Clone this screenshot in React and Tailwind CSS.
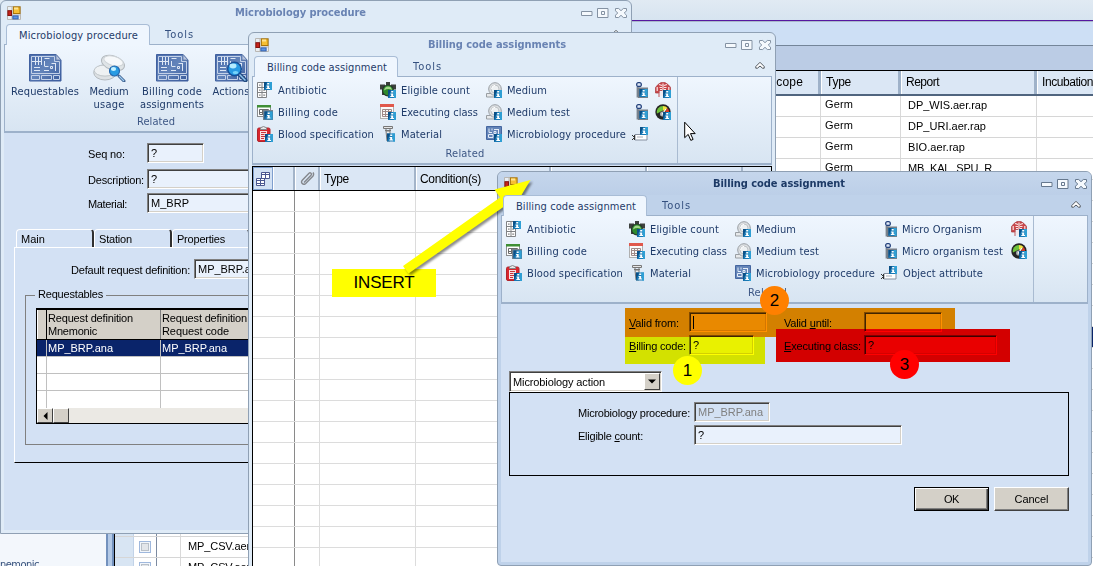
import { useLayoutEffect, useRef, useState } from "react";

const TAHOMA = "font-['DejaVu_Sans_Condensed','DejaVu_Sans',sans-serif] font-stretch-condensed";
const ARIAL = "font-['Liberation_Sans',Arial,sans-serif]";

/* Text that spreads or tightens its letters to take a given width. */
function Fit({ w, children, className = "" }) {
  const ref = useRef(null);
  const [spacing, setSpacing] = useState(0);
  useLayoutEffect(() => {
    const el = ref.current;
    const count = el.textContent.length;
    const natural = el.getBoundingClientRect().width - spacing * count;
    setSpacing((w - natural) / count);
  }, [w]);
  return (
    <span ref={ref} style={{ letterSpacing: spacing }} className={"inline-block shrink-0 whitespace-nowrap " + className}>
      {children}
    </span>
  );
}

/* ---------- small icons ---------- */

function Info({ x = 8, y = 8 }) {
  return (
    <g transform={`translate(${x} ${y})`}>
      <rect width="8" height="8" fill="#1878b4" />
      <path d="M0 8V0h3z" fill="#0b4f86" />
      <path d="M5 0h3v8H6z" fill="#2f9fd4" />
      <path d="M3.200 1h2v1.600h-2zM2.600 3.500h2.600v2.600h.8v1H2.300v-1h.9V4.400h-.6z" fill="#fff" />
    </g>
  );
}

function Svg({ children, size = 16 }) {
  return (
    <svg width={size} height={size} viewBox="0 0 16 16" className="shrink-0">
      {children}
    </svg>
  );
}

function Antibiotic() {
  return (
    <Svg>
      <path d="M.5.5h9v15h-9zM5 .5v15M.5 5.500h9M.5 10.500h9" fill="#fff" stroke="#808285" />
      <path d="M2 2.500h1.600v1.200H2zM6.200 7.500h2v1.200h-2zM2 7.500h1.600v1.200H2zM2 12.500h1.600v1.200H2zM6.200 12.500h2v1.200h-2z" fill="#888" />
      <Info x={7} y={0} />
    </Svg>
  );
}

function BillingCode() {
  return (
    <Svg>
      <rect x=".5" y="1.500" width="13" height="11" fill="#fff" stroke="#8a8d90" />
      <rect y="1" width="14" height="2.500" fill="#3f8f35" />
      <path d="M2.500 5.500h9v5h-9zM5.500 5.500v5M8.500 5.500v5M2.500 8.500h9" fill="none" stroke="#6c6c6c" />
      <rect x="6" y="6" width="10" height="10" fill="#77838f" />
      <Info x={7.5} y={7.5} />
    </Svg>
  );
}

function Blood() {
  return (
    <Svg>
      <rect x=".5" y="2" width="12.500" height="13.500" rx="1.500" fill="#d9262e" stroke="#b0242b" />
      <path d="M3.500 3.500V1.800Q6.500-.8 9.500 1.800v1.700z" fill="#e8e8e8" stroke="#85888b" />
      <path d="M3 5h7v9H3z" fill="#f8e2e2" />
      <path d="M4 6.500h5M4 8.500h3.500M4 10.500h4M4 12.500h3" stroke="#c9333a" />
      <Info />
    </Svg>
  );
}

function Eligible() {
  return (
    <Svg>
      <path d="M6 0h4v3H6zM0 2.500h5v5H0zM11 2.500h5v5h-5zM2 7h3v6H2z" fill="#3c403d" />
      <circle cx="8" cy="8.500" r="6" fill="#26332a" />
      <circle cx="8" cy="8.500" r="4.900" fill="#2f8a2d" />
      <path d="M4 8.500Q4.800 4.600 8 4.600T12 8Q8 6 4 8.500z" fill="#a2d889" />
      <Info />
    </Svg>
  );
}

function Executing() {
  return (
    <Svg>
      <rect x=".5" y=".5" width="13" height="14" fill="#fafafa" stroke="#b0b0b0" />
      <rect width="14" height="3" fill="#e0584c" />
      <path d="M2.500 5.500h9v7h-9zM5.500 5v8M8.500 5v8M2 7.500h10M2 10.500h10" fill="none" stroke="#a08a88" />
      <Info />
    </Svg>
  );
}

function Material() {
  return (
    <Svg>
      <path d="M3.500.5h9v2h-9zM5 4.500h6M6 2.500v2M10 2.500v2" fill="#e6e6e6" stroke="#777" />
      <path d="M6 5h4v10H7z" fill="#eee" stroke="#777" />
      <Info x={7} y={7.5} />
    </Svg>
  );
}

function Medium() {
  return (
    <Svg>
      <path d="M.5 11.500h11v3.500H.5z" fill="#e7e9eb" stroke="#999ea3" />
      <circle cx="9" cy="7" r="6.300" fill="#dde0e3" stroke="#999ea3" />
      <circle cx="9" cy="7" r="4" fill="#edf0f2" stroke="#bfc3c6" />
      <path d="M5.500 7Q6 3.500 9 3.300" fill="none" stroke="#fff" />
      <Info />
    </Svg>
  );
}

function Procedure() {
  return (
    <Svg>
      <path d="M.5.500h15v13H.5z" fill="#6384b8" stroke="#4466a0" />
      <path d="M3 2.500v4h3M6 2.500v2M8 3.500h4M8 5.500v2h2v-2zM12.500 3v5M2.500 8.500v3H7v-3zM8.500 10h5" fill="none" stroke="#e4edf8" />
      <Info />
    </Svg>
  );
}

function Organism() {
  return (
    <Svg>
      <rect x="2.700" y=".7" width="4.600" height="3.800" rx="1.500" fill="#dce6f6" stroke="#24427c" strokeWidth="1.300" />
      <path d="M3.500 5v10.500" stroke="#7a838e" strokeWidth="1.800" />
      <path d="M4 5.500h10V16H4z" fill="#767e88" />
      <Info x={5.500} y={7} />
    </Svg>
  );
}

function Attribute() {
  return (
    <Svg>
      <path d="M3 8.500h12v5.500H3z" fill="#fff" stroke="#8590a0" />
      <path d="M0 9l2.500 2.500M2.500 9v5M0 14l2-2" stroke="#333" fill="none" />
      <path d="M5 11h6" stroke="#a8aeb8" />
      <Info x={8} y={1} />
    </Svg>
  );
}

function Body() {
  return (
    <Svg>
      <path d="M3 2.500L6 .6h4L13 2.500l2.500 2.800V11H12V8.500H4V11H.5V5.500z" fill="#c9474b" stroke="#a8373b" strokeWidth=".7" />
      <path d="M4 2.500l3 1M12 2.500l-3 1M4.500 5.500H7M9 5.500h2.500M5 7.500h2M9 7.500h2M2.200 5v4M13.800 5v4M8 1.500V14M6 10v4" stroke="#f9e4e4" strokeWidth="1.200" />
      <path d="M4 9v6M10 9v4" stroke="#c2565a" />
      <Info />
    </Svg>
  );
}

function Gauge() {
  return (
    <Svg>
      <circle cx="8" cy="8" r="7.700" fill="#252525" />
      <path d="M2 9.500A6 6 0 0 1 8 2v4.500z" fill="#6fc33b" />
      <path d="M8 2q3 0 4.500 2L9.500 7 8 6.500z" fill="#f1e441" />
      <path d="M12.500 4q1.700 2 1.500 4L10 8z" fill="#da3a28" />
      <circle cx="7.500" cy="10" r="2.500" fill="#aab0b1" />
      <path d="M7 10.500L11 5" stroke="#fff" strokeWidth="1.200" />
      <Info />
    </Svg>
  );
}

function AppIcon() {
  return (
    <svg width="14" height="14" viewBox="0 0 14 14" className="shrink-0">
      <path d="M.5.5h13v13H.5zM5 1v12M1 9h12" fill="#e9edf1" stroke="#b9b7b3" />
      <rect x=".9" y="4.700" width="3.600" height="4.800" fill="#c72218" stroke="#82130f" />
      <rect x="6.400" y=".9" width="6.600" height="6.600" fill="#f6bf32" stroke="#a97408" />
      <path d="M7 1.500h4v2H7z" fill="#fee391" />
      <rect x="5.900" y="9.900" width="5.200" height="3" fill="#5d94e4" stroke="#2f60b2" />
    </svg>
  );
}

/* ---------- large icons ---------- */

function Blueprint({ children }) {
  return (
    <svg width="33" height="28" viewBox="0 0 33 28" className="shrink-0">
      <defs>
        <linearGradient id="bp" x1="0" y1="0" x2="1" y2="1">
          <stop offset="0" stopColor="#4a6cab" />
          <stop offset=".5" stopColor="#6384ba" />
          <stop offset="1" stopColor="#38599a" />
        </linearGradient>
      </defs>
      <path d="M.5.5H27l5 5.500v21H.5z" fill="url(#bp)" stroke="#4161a0" />
      <path d="M27 .5V6h5z" fill="#b6c4de" stroke="#5a74a5" strokeWidth=".7" />
      <path d="M2.500 19.500v-17h23V7.500h5v12zM2.500 21.500h8v4h-8zM12.500 21.500h10v4h-10zM24.500 21.500h6v4h-6z" fill="none" stroke="#c3d1e8" />
      <path d="M6.500 3v8M9.500 3v8M12.500 3v8M3 7.500h10M15.500 4.500h5M5 13.500h6M5 16.500h6M15.500 7v5M15.500 12.500h4M26.500 9v8M15 16.500h5M22.500 9.500h4M21.500 12.500h2v2h-2z" fill="none" stroke="#dfe8f5" />
      {children}
    </svg>
  );
}

function Lens() {
  return (
    <g>
      <path d="M24 20l6.500 6.500" stroke="#244c80" strokeWidth="4" strokeLinecap="round" />
      <path d="M24 20l6.500 6.500" stroke="#8fc4ee" strokeWidth="1.500" />
      <circle cx="19.500" cy="15" r="6.800" fill="#289be3" stroke="#164f98" strokeWidth="1.500" />
      <ellipse cx="18" cy="12" rx="3.500" ry="2.400" fill="#b4ecff" />
      <ellipse cx="20.500" cy="18.500" rx="2.800" ry="1.600" fill="#77d5fb" />
    </g>
  );
}

function Petri() {
  return (
    <svg width="33" height="28" viewBox="0 0 33 28" className="shrink-0">
      <ellipse cx="12" cy="18.500" rx="11.300" ry="7.500" fill="#dde1e4" stroke="#b3b9be" />
      <ellipse cx="12" cy="16.500" rx="10.800" ry="5.600" fill="#eef1f3" stroke="#bfc5c9" />
      <ellipse cx="20" cy="9" rx="12" ry="7" transform="rotate(20 20 9)" fill="#dfe4e7" stroke="#b3b9be" />
      <ellipse cx="20.500" cy="7" rx="10" ry="4.600" transform="rotate(16 20.500 7)" fill="#f6f8fa" stroke="#cfd4d8" />
      <path d="M26 22l5 5" stroke="#3c5f8e" strokeWidth="3" strokeLinecap="round" />
      <path d="M26 22l5 5" stroke="#9ccbf0" strokeWidth="1.200" />
      <circle cx="21.500" cy="17" r="5" fill="#289be3" stroke="#2569b0" strokeWidth="1.200" />
      <ellipse cx="20.500" cy="15" rx="2.600" ry="2" fill="#c4f1ff" />
    </svg>
  );
}

/* ---------- windows ---------- */

function WindowButtons({ stroke }) {
  return (
    <svg width="47" height="12" viewBox="0 0 47 12" className={"shrink-0 " + stroke} fill="#f5f9fd">
      <path d="M.5 4.500h10.500v4H.5zM16.500 1.500H27v9H16.500zM20.500 4.500h3v3h-3z" />
      <path d="M34.500 1.500h3.200l2.300 2.200 2.300-2.200h3.200v2.300L43.300 6l2.200 2.200v2.300h-3.200L40 8.300l-2.300 2.200h-3.200V8.200L36.700 6l-2.200-2.200z" />
    </svg>
  );
}

function Window({ place, active, title, titleX, titleW, tab, tabTextW, ribbon, children }) {
  return (
    <section
      className={
        "absolute flex flex-col overflow-hidden rounded-t-[6px] border border-[#8fa0b4] " +
        place +
        (active ? " rounded-b-[4px] bg-[#bfd2ea]" : " bg-[#dfebf7]")
      }
    >
      <header className={"flex h-[23px] shrink-0 items-center pr-[3px] pl-[6px] " + (active ? "bg-linear-to-b from-[#c5d6ec] to-[#bccfe8]" : "")}>
        <AppIcon />
        <h1 className={"flex-1 text-[11px] leading-none font-bold " + titleX + " " + TAHOMA + (active ? " text-[#1d3a66]" : " text-[#6983b3]")}>
          <Fit w={titleW}>{title}</Fit>
        </h1>
        <WindowButtons stroke={active ? "stroke-[#66788e]" : "stroke-[#8492a3]"} />
      </header>
      <nav className={"flex h-[20px] shrink-0 pl-[5px] text-[11px] text-[#1f3b69] " + TAHOMA}>
        <div className="z-10 -mb-px h-[21px] w-[144px] rounded-t-[4px] border border-b-0 border-[#a9bdd6] bg-[#eff6fe] pl-[12px] leading-[21px]">
          <Fit w={tabTextW}>{tab}</Fit>
        </div>
        <div className="flex-1 pl-[15px] leading-[22px] text-[#34507f]">
          <Fit w={29}>Tools</Fit>
        </div>
        <svg width="10" height="9" viewBox="0 0 10 9" className="mt-[5px] mr-[10px]" fill="#fff" stroke="#50565e">
          <path d="M.8 5.500L5 1.300l4.200 4.200v1.700H7.500L5 5 2.500 7.200H.8z" />
        </svg>
      </nav>
      <div className={"mx-[3px] h-[89px] shrink-0 border border-b-2 border-[#9db1ca] bg-linear-to-b from-[#eff6fe] to-[#d8e5f2] text-[11px] text-[#1f3b69] " + TAHOMA}>
        {ribbon}
      </div>
      <div className={"mx-[3px] mb-[3px] flex flex-1 flex-col overflow-hidden bg-[#d3e1f4] text-[11px] text-black " + ARIAL}>
        {children}
      </div>
    </section>
  );
}

function Item({ icon: Icon, label, w, gap = "gap-[5px]" }) {
  return (
    <div className={"flex h-[22px] items-center leading-none " + gap}>
      <Icon />
      {label && <Fit w={w}>{label}</Fit>}
    </div>
  );
}

function RelatedRibbon({ wide }) {
  return (
    <div className="flex h-full">
      <div className={"flex flex-col border-r border-[#a9bbd1] pt-[2px] " + (wide ? "w-[532px]" : "w-[425px]")}>
        <div className="flex pl-[4px]">
          <div className="w-[123px]">
            <Item icon={Antibiotic} label="Antibiotic" w={49} />
            <Item icon={BillingCode} label="Billing code" w={60} />
            <Item icon={Blood} label="Blood specification" w={96} />
          </div>
          <div className="w-[106px]">
            <Item icon={Eligible} label="Eligible count" w={69} />
            <Item icon={Executing} label="Executing class" w={77} />
            <Item icon={Material} label="Material" w={41} />
          </div>
          <div className="w-[146px]">
            <Item icon={Medium} label="Medium" w={40} />
            <Item icon={Medium} label="Medium test" w={63} />
            <Item icon={Procedure} label="Microbiology procedure" w={119} />
          </div>
          <div className={wide ? "w-[130px]" : "w-[23px]"}>
            <div className="pl-[2px]">
              <Item icon={Organism} label={wide && "Micro Organism"} w={80} gap="gap-[3px]" />
              <Item icon={Organism} label={wide && "Micro organism test"} w={101} gap="gap-[3px]" />
            </div>
            <Item icon={Attribute} label={wide && "Object attribute"} w={80} gap="gap-[6px]" />
          </div>
          <div>
            <Item icon={Body} />
            <Item icon={Gauge} />
          </div>
        </div>
        <div className="text-center leading-[18px] text-[#3d5785]">
          <Fit w={39}>Related</Fit>
        </div>
      </div>
    </div>
  );
}

function BigButton({ icon, lines, width }) {
  return (
    <div className={"flex shrink-0 flex-col items-center " + width}>
      {icon}
      <div className="mt-[3px] flex flex-col items-center leading-[13px]">
        {lines.map(([text, w]) => (
          <Fit key={text} w={w}>{text}</Fit>
        ))}
      </div>
    </div>
  );
}

function Field({ className = "", text = "", tone = "bg-[#e9f1fc] text-black" }) {
  return (
    <div
      className={
        "h-[20px] shrink-0 border border-t-[#808080] border-r-white border-b-white border-l-[#808080] " +
        "shadow-[inset_1px_1px_0_#404040,inset_-1px_-1px_0_#d4d0c8] pl-[3px] leading-[18px] " + tone + " " + className
      }
    >
      {text}
    </div>
  );
}

/* ---------- background application ---------- */

const reports = ["DP_WIS.aer.rap", "DP_URI.aer.rap", "BIO.aer.rap", "MB_KAL_SPU_R"];

function HeaderCell({ className, children }) {
  return (
    <div className={"h-full shrink-0 border-r-[3px] border-l border-r-[#9fb2c9] border-l-white bg-[#dbe7f5] leading-[23px] " + className}>
      {children}
    </div>
  );
}

function Backdrop() {
  return (
    <div className={"flex h-full flex-col text-[11px] text-black " + ARIAL}>
      <div className="h-[20px] shrink-0 bg-linear-to-b from-[#e1eaf3] to-[#d7e4f0]" />
      <div className="h-px shrink-0 bg-[#5618a0]" />
      <div className="h-px shrink-0 bg-[#a9b9cb]" />
      <div className="h-[23px] shrink-0 bg-[#cddff5]" />
      <div className="h-px shrink-0 bg-[#748599]" />
      <div className="h-[24px] shrink-0 bg-[#bbcce5]" />
      <div className="flex min-h-0 flex-1">
        <div className="flex w-[106px] shrink-0 flex-col justify-end bg-[#f3f7fc] text-[11px] text-[#35507b]">
          <div className={"-mb-[7px] leading-[16px] " + TAHOMA}>
            <Fit w={39}>nemonic</Fit>
          </div>
        </div>
        <div className="w-[8px] shrink-0 border-x-2 border-[#7291bd] bg-[#b3c9e6]" />
        <div className="min-w-0 flex-1 overflow-hidden border-t border-l border-black bg-white">
          <div className="flex h-[25px] border-b-2 border-[#50657f] text-[12px]">
            <div className="w-[645px] shrink-0 bg-[#dbe7f5]" />
            <HeaderCell className="w-[61px] pl-[7px]"><Fit w={35}>Scope</Fit></HeaderCell>
            <HeaderCell className="w-[80px] pl-[4px]"><Fit w={25}>Type</Fit></HeaderCell>
            <HeaderCell className="w-[136px] pl-[4px]"><Fit w={33}>Report</Fit></HeaderCell>
            <HeaderCell className="w-[136px] pl-[4px]"><Fit w={51}>Incubation</Fit></HeaderCell>
          </div>
          {Array.from({ length: 23 }, (_, i) => (
            <div key={i} className={"flex h-[21px] border-b border-[#d6d6d6] leading-[17px] " + (i === 11 ? "bg-[#0a246a]" : "")}>
              <div className="w-[19px] shrink-0 border-r border-[#c2d3e8] bg-[#d8e5f3]" />
              <div className="flex w-[23px] shrink-0 items-center justify-center border-r border-[#7c8aa0]">
                <div className="h-[12px] w-[12px] border border-[#9fb8dd] bg-[#f2f6fb] p-px">
                  <div className="h-full w-full border border-[#b9c0c8] bg-[#e3e6ea]" />
                </div>
              </div>
              <div className="w-[24px] shrink-0 border-r border-[#d9d9d9]" />
              <div className="w-[640px] shrink-0 border-r border-[#d9d9d9] pt-px pl-[7px]">
                {i > 20 && <Fit w={68}>MP_CSV.aer.r</Fit>}
              </div>
              <div className="w-[80px] shrink-0 border-r border-[#d9d9d9] pl-[4px]">{i < 4 && <Fit w={28}>Germ</Fit>}</div>
              <div className="w-[136px] shrink-0 border-r border-[#d9d9d9] pt-px pl-[7px]">
                {reports[i] && <Fit w={[79, 78, 57, 84][i]}>{reports[i]}</Fit>}
              </div>
            </div>
          ))}
        </div>
      </div>
    </div>
  );
}

/* ---------- window contents ---------- */

function FormRow({ label, w, children, className = "" }) {
  return (
    <div className={"flex h-[20px] pl-[84px] " + className}>
      <div className="w-[59px] shrink-0 leading-[22px]"><Fit w={w}>{label}</Fit></div>
      {children}
    </div>
  );
}

function PageTab({ label, w }) {
  return (
    <div className="h-[18px] w-[78px] shrink-0 rounded-t-[4px] border-t border-r-2 border-l border-t-white border-r-[#303030] border-l-white pl-[4px] leading-[19px]">
      <Fit w={w}>{label}</Fit>
    </div>
  );
}

function RequestGrid() {
  return (
    <div className="mt-[2px] ml-[10px] h-[116px] w-[560px] border-t-2 border-b border-l border-black bg-white">
      <div className="flex h-[30px] border-b border-black bg-[#d4d0c8] leading-[13px]">
        <div className="w-[10px] border-r border-black border-l border-l-white" />
        <div className="w-[114px] border-r border-[#808080] pt-[2px] pl-px">
          <Fit w={85}>Request definition</Fit>
          <br />
          <Fit w={49}>Mnemonic</Fit>
        </div>
        <div className="w-[114px] border-r border-[#808080] pt-[2px] pl-px">
          <Fit w={85}>Request definition</Fit>
          <br />
          <Fit w={67}>Request code</Fit>
        </div>
      </div>
      {[0, 1, 2, 3].map((i) => (
        <div key={i} className={"flex h-[17px] leading-[16px] " + (i === 0 ? "bg-[#0a246a] text-white" : "") + (i < 3 ? " border-b border-[#c0c0c0]" : "")}>
          <div className="w-[10px] border-r border-[#c0c0c0]" />
          <div className="w-[114px] border-r border-[#c0c0c0] pl-px">{i === 0 && <Fit w={65}>MP_BRP.ana</Fit>}</div>
          <div className="pl-px">{i === 0 && <Fit w={65}>MP_BRP.ana</Fit>}</div>
        </div>
      ))}
      <div className="flex h-[15px] bg-[#ebe9e4]">
        <div className="flex w-[16px] items-center justify-center border border-t-white border-r-[#404040] border-b-[#404040] border-l-white bg-[#d4d0c8]">
          <svg width="5" height="8" viewBox="0 0 5 8"><path d="M4.500 0v8L.5 4z" /></svg>
        </div>
        <div className="w-[16px] border border-t-white border-r-[#404040] border-b-[#404040] border-l-white bg-[#d4d0c8]" />
      </div>
    </div>
  );
}

function ProcedureBody() {
  return (
    <div className="flex flex-col pt-[10px]">
      <FormRow label="Seq no:" w={37}><Field className="w-[57px]" text="?" /></FormRow>
      <FormRow label="Description:" w={56} className="mt-[6px]"><Field className="w-[300px]" text="?" /></FormRow>
      <FormRow label="Material:" w={39} className="mt-[4px]"><Field className="w-[300px]" text={<Fit w={38}>M_BRP</Fit>} /></FormRow>
      <div className="mt-[16px] flex pl-[12px]">
        <PageTab label="Main" w={24} />
        <PageTab label="Station" w={33} />
        <PageTab label="Properties" w={48} />
      </div>
      <div className="ml-[10px] h-[216px] border-t border-b border-l border-t-white border-b-black border-l-white pt-[11px] pl-[10px]">
        <div className="flex h-[20px] pl-[46px]">
          <div className="w-[123px] shrink-0 leading-[22px]"><Fit w={119}>Default request definition:</Fit></div>
          <Field className="w-[200px]" text={<Fit w={65}>MP_BRP.ana</Fit>} />
        </div>
        <div className="mt-[8px] flex items-center leading-[14px]">
          <div className="mt-[3px] h-px w-[10px] bg-[#808080]" />
          <Fit w={65} className="mx-[3px]">Requestables</Fit>
          <div className="mt-[3px] h-px flex-1 bg-[#808080]" />
        </div>
        <div className="-mt-[5px] h-[149px] border-b border-l border-[#808080] pt-[10px]">
          <RequestGrid />
        </div>
      </div>
    </div>
  );
}

function ListHeader({ className, children }) {
  return (
    <div className={"h-full shrink-0 border-r-2 border-l border-r-[#a3b4c9] border-l-white text-[12px] leading-[24px] " + className}>
      {children}
    </div>
  );
}

function AssignmentList() {
  return (
    <div className="mt-px flex-1 border border-b-0 border-black bg-white">
      <div className="flex h-[24px] border-b border-black bg-[#dbe7f5]">
        <div className="flex w-[20px] shrink-0 items-center justify-center border border-[#7f9fce] bg-[#d2e1f4]">
          <svg width="14" height="14" viewBox="0 0 14 14" fill="#fff" stroke="#4b5790">
            <path d="M5.500.5h8v6h-8zM5.500 2.500h8M9.500.5v6M.5 6.500h8v7h-8zM.5 8.500h8M4.500 6.500v7M.5 11.500h8" />
          </svg>
        </div>
        <ListHeader className="w-[22px]" />
        <ListHeader className="flex w-[25px] items-center justify-center">
          <svg width="15" height="15" viewBox="0 0 15 15" fill="none" stroke="#84878c" strokeWidth="1.400">
            <path d="M4 11.500L11 4.200q1-1.200 0-2t-2 0L2.500 9q-1.800 2-.3 3.600t3.500-.2L13 5q1.200-1.700 0-3.500" />
          </svg>
        </ListHeader>
        <ListHeader className="w-[96px] pl-[3px]"><Fit w={25}>Type</Fit></ListHeader>
        <ListHeader className="w-[135px] pl-[3px]"><Fit w={61}>Condition(s)</Fit></ListHeader>
        <ListHeader className="w-[96px]" />
        <ListHeader className="w-[96px]" />
      </div>
      {Array.from({ length: 18 }, (_, i) => (
        <div key={i} className="flex h-[21px] border-b border-[#dcdcdc]">
          <div className="w-[42px] shrink-0 border-r border-[#8a8a8a]" />
          <div className="w-[25px] shrink-0 border-r border-[#dcdcdc]" />
          <div className="w-[96px] shrink-0 border-r border-[#dcdcdc]" />
        </div>
      ))}
    </div>
  );
}

function AssignmentForm() {
  return (
    <div className="flex flex-col pt-[8px]">
      <div className="flex h-[20px] pl-[128px]">
        <div className="w-[60px] shrink-0 leading-[22px]"><Fit w={50}><u>V</u>alid from:</Fit></div>
        <Field className="w-[78px]" text={<div className="mt-[3px] h-[13px] w-px bg-black" />} />
        <div className="ml-[17px] w-[80px] shrink-0 leading-[22px]"><Fit w={48}>Valid <u>u</u>ntil:</Fit></div>
        <Field className="w-[78px]" />
      </div>
      <div className="mt-[3px] flex h-[20px] pl-[128px]">
        <div className="w-[60px] shrink-0 leading-[22px]"><Fit w={57}><u>B</u>illing code:</Fit></div>
        <Field className="w-[65px]" text="?" />
        <div className="ml-[30px] w-[80px] shrink-0 leading-[22px]"><Fit w={77}><u>E</u>xecuting class:</Fit></div>
        <Field className="w-[133px]" text="?" />
      </div>
      <div className="mt-[16px] ml-[8px] flex h-[21px] w-[153px] border border-t-[#808080] border-r-white border-b-white border-l-[#808080] bg-white p-px leading-[19px] shadow-[inset_1px_1px_0_#404040,inset_-1px_-1px_0_#d4d0c8]">
        <div className="flex-1 pl-[2px]"><Fit w={92}>Microbiology action</Fit></div>
        <div className="flex w-[16px] items-center justify-center border border-t-white border-r-[#404040] border-b-[#404040] border-l-white bg-[#d4d0c8]">
          <svg width="8" height="5" viewBox="0 0 8 5"><path d="M0 .5h8L4 4.500z" /></svg>
        </div>
      </div>
      <div className="ml-[8px] h-[84px] w-[560px] border border-black pt-[9px] pl-[68px]">
        <div className="flex h-[20px]">
          <div className="w-[116px] shrink-0 leading-[22px]"><Fit w={112}>Microbiology procedure:</Fit></div>
          <Field className="w-[76px]" tone="bg-[#d3e1f4] text-[#808080]" text={<Fit w={65}>MP_BRP.ana</Fit>} />
        </div>
        <div className="mt-[3px] flex h-[20px]">
          <div className="w-[116px] shrink-0 leading-[22px]"><Fit w={65}>Eligible <u>c</u>ount:</Fit></div>
          <Field className="w-[208px]" text="?" />
        </div>
      </div>
      <div className="mt-[11px] flex gap-[5px] pl-[413px] text-center leading-[22px]">
        <div className="h-[24px] w-[75px] border border-black bg-[#d4d0c8] shadow-[inset_1px_1px_0_#fff,inset_-1px_-1px_0_#404040,inset_-2px_-2px_0_#808080]">
          <Fit w={15}>OK</Fit>
        </div>
        <div className="h-[24px] w-[75px] border border-t-white border-r-[#404040] border-b-[#404040] border-l-white bg-[#d4d0c8] shadow-[inset_-1px_-1px_0_#808080]">
          <Fit w={34}>Cancel</Fit>
        </div>
      </div>
    </div>
  );
}

/* ---------- annotations ---------- */

function Badge({ n, className }) {
  return (
    <div className={"absolute flex h-[29px] w-[29px] items-center justify-center rounded-full text-[17px] leading-none text-black " + ARIAL + " " + className}>
      {n}
    </div>
  );
}

export default function App() {
  return (
    <main className="relative isolate h-[566px] w-[1093px] overflow-hidden bg-white">
      <Backdrop />

      <Window
        place="left-0 top-0 h-[534px] w-[632px]"
        title="Microbiology procedure"
        titleX="pl-[214px]"
        titleW={131}
        tab="Microbiology procedure"
        tabTextW={119}
        ribbon={
          <div className="flex h-full flex-col pt-[9px]">
            <div className="flex h-[61px]">
              <BigButton width="w-[80px]" icon={<Blueprint />} lines={[["Requestables", 68]]} />
              <BigButton width="w-[48px]" icon={<Petri />} lines={[["Medium", 39], ["usage", 31]]} />
              <BigButton width="w-[78px]" icon={<Blueprint />} lines={[["Billing code", 60], ["assignments", 64]]} />
              <BigButton width="w-[40px]" icon={<Blueprint><Lens /></Blueprint>} lines={[["Actions", 37]]} />
            </div>
            <div className="pl-[132px] leading-[14px] text-[#3d5785]"><Fit w={38}>Related</Fit></div>
          </div>
        }
      >
        <ProcedureBody />
      </Window>

      <Window
        place="left-[248px] top-[32px] h-[540px] w-[528px]"
        title="Billing code assignments"
        titleX="pl-[159px]"
        titleW={138}
        tab="Billing code assignment"
        tabTextW={120}
        ribbon={<RelatedRibbon />}
      >
        <AssignmentList />
      </Window>

      <svg className="absolute top-[121px] left-[684px]" width="13" height="21" viewBox="0 0 13 21">
        <path d="M.7 1.200v15.500l3.500-3.300 2.600 6 2.300-1-2.600-5.800h4.700z" fill="#fff" stroke="#000" />
      </svg>

      <Window
        active
        place="left-[497px] top-[171px] h-[395px] w-[595px]"
        title="Billing code assignment"
        titleX="pl-[195px]"
        titleW={132}
        tab="Billing code assignment"
        tabTextW={120}
        ribbon={<RelatedRibbon wide />}
      >
        <AssignmentForm />
      </Window>

      <div className="absolute top-[308px] left-[625px] h-[29px] w-[330px] bg-[#ff9100] mix-blend-multiply" />
      <div className="absolute top-[337px] left-[625px] h-[27px] w-[140px] bg-[#ffff00] mix-blend-multiply" />
      <div className="absolute top-[329px] left-[776px] h-[33px] w-[234px] bg-[#ff0000] mix-blend-multiply" />
      <Badge n="1" className="top-[356px] left-[673px] bg-[#ffff00]" />
      <Badge n="2" className="top-[286px] left-[760px] bg-[#ff8000]" />
      <Badge n="3" className="top-[350px] left-[890px] bg-[#ff0000]" />

      <div className={"absolute top-[269px] left-[332px] flex h-[28px] w-[104px] items-center justify-center bg-[#ffff00] pb-px text-[17px] leading-none text-black " + ARIAL}>
        <Fit w={61}>INSERT</Fit>
      </div>
      <svg className="absolute top-[170px] left-[395px] drop-shadow-[2px_2px_1px_rgba(0,0,0,0.45)]" width="145" height="110" viewBox="395 170 145 110">
        <path d="M403 266L500 197.500l-5.500-8L530.500 180l-19.500 32.500-5.500-7L408.500 273.500z" fill="#ffff00" />
      </svg>
    </main>
  );
}
